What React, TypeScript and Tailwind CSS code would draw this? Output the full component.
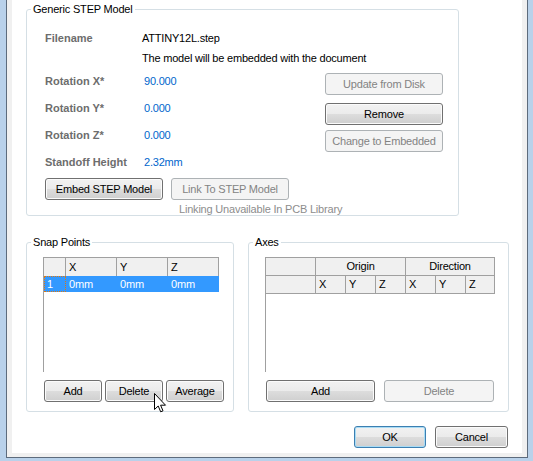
import React from 'react';

type BtnProps = {
  children: React.ReactNode;
  className?: string;
  disabled?: boolean;
  primary?: boolean;
};

const Btn: React.FC<BtnProps> = ({ children, className = '', disabled, primary }) => {
  const look = disabled
    ? 'border-[#adb2b5] bg-[#f4f4f4] text-[#838383]'
    : primary
      ? 'border-[#3c7fb1] bg-[linear-gradient(to_bottom,#f2f2f2_0%,#ebebeb_50%,#dddddd_50%,#cfcfcf_100%)] shadow-[inset_0_0_0_1px_#a9dcf5] text-black'
      : 'border-[#707070] bg-[linear-gradient(to_bottom,#f2f2f2_0%,#ebebeb_50%,#dddddd_50%,#cfcfcf_100%)] shadow-[inset_0_0_0_1px_#fbfbfb] text-black';
  return (
    <button
      disabled={disabled}
      className={`flex h-[22px] items-center justify-center rounded-[3px] border text-[11px] font-normal leading-none ${look} ${className}`}
    >
      {children}
    </button>
  );
};

type GroupProps = {
  title: string;
  className?: string;
  children: React.ReactNode;
};

const Group: React.FC<GroupProps> = ({ title, className = '', children }) => (
  <fieldset className={`min-w-0 rounded-[3px] border border-[#d5dfe5] ${className}`}>
    <legend className="ml-[4px] px-[2px] text-[11px] leading-[13px] text-black">{title}</legend>
    {children}
  </fieldset>
);

const cell = 'flex items-center border-r border-b border-[#a0a0a0]';

export default function App() {
  const rotations = [
    ['Rotation X*', '90.000'],
    ['Rotation Y*', '0.000'],
    ['Rotation Z*', '0.000'],
    ['Standoff Height', '2.32mm'],
  ];

  return (
    <div className="h-[461px] w-[533px] bg-[#b9d1ea] pr-[5px] pb-[3px] pl-[6px] font-['Liberation_Sans',Arial,sans-serif] text-[11px] leading-[13px] tracking-[-0.2px] text-black">
      <div className="h-full border-r border-b border-l border-[#5d6b7c] bg-[#f0f0f0] px-[5px] pb-[4px]">
        <div className="relative h-full bg-white pt-[3px]">
          {/* Generic STEP Model */}
          <Group title="Generic STEP Model" className="ml-[14px] h-[213px] w-[433px]">
            <div className="pt-[12px] pl-[18px]">
              <div className="flex h-[20px] items-center">
                <span className="w-[97px] font-bold tracking-normal text-[#6d6d6d]">Filename</span>
                <span>ATTINY12L.step</span>
              </div>
              <div className="flex h-[20px] items-center pl-[97px]">
                The model will be embedded with the document
              </div>
              <div className="flex">
                <div className="w-[280px]">
                  {rotations.map(([label, value]) => (
                    <div key={label} className="flex h-[27px] items-center">
                      <span className="w-[99px] font-bold tracking-normal text-[#6d6d6d]">{label}</span>
                      <span className="text-[#0066cc]">{value}</span>
                    </div>
                  ))}
                </div>
                <div className="flex flex-col pt-[5px]">
                  <Btn disabled className="w-[118px]">Update from Disk</Btn>
                  <Btn className="mt-[8px] w-[118px]">Remove</Btn>
                  <Btn disabled className="mt-[5px] w-[118px]">Change to Embedded</Btn>
                </div>
              </div>
              <div className="mt-[2px] flex gap-[8px]">
                <Btn className="w-[118px]">Embed STEP Model</Btn>
                <Btn disabled className="w-[118px]">Link To STEP Model</Btn>
              </div>
              <div className="mt-[3px] pl-[134px] text-[#8d8d8d]">Linking Unavailable In PCB Library</div>
            </div>
          </Group>

          <div className="mt-[20px] ml-[14px] flex gap-[14px]">
            {/* Snap Points */}
            <Group title="Snap Points" className="h-[176px] w-[208px]">
              <div className="mt-[8px] ml-[16px] h-[115px] w-[176px] border-t border-l border-[#a0a0a0]">
                <div className="flex h-[18px] bg-[#f0f0f0]">
                  <div className={`${cell} w-[22px] border-b-0`} />
                  {['X', 'Y', 'Z'].map((c) => (
                    <div key={c} className={`${cell} w-[51px] border-b-0 pl-[3px]`}>{c}</div>
                  ))}
                </div>
                <div className="flex h-[16px] bg-[#3399ff] text-white">
                  <div className="flex w-[22px] items-center border border-dotted border-[#e0780e] pl-[2px]">1</div>
                  {['0mm', '0mm', '0mm'].map((v, i) => (
                    <div key={i} className="flex w-[51px] items-center pl-[3px]">{v}</div>
                  ))}
                </div>
              </div>
              <div className="mt-[8px] ml-[17px] flex gap-[3px]">
                <Btn className="w-[58px]">Add</Btn>
                <Btn className="w-[58px]">Delete</Btn>
                <Btn className="w-[58px]">Average</Btn>
              </div>
            </Group>

            {/* Axes */}
            <Group title="Axes" className="h-[176px] w-[261px]">
              <div className="mt-[8px] ml-[16px] h-[115px] w-[230px] border-t border-l border-[#a0a0a0]">
                <div className="flex h-[18px] bg-[#f0f0f0]">
                  <div className={`${cell} w-[50px]`} />
                  <div className={`${cell} w-[90px] justify-center`}>Origin</div>
                  <div className={`${cell} w-[89px] justify-center`}>Direction</div>
                </div>
                <div className="flex h-[18px] bg-[#f0f0f0]">
                  <div className={`${cell} w-[50px]`} />
                  {['X', 'Y', 'Z', 'X', 'Y'].map((c, i) => (
                    <div key={i} className={`${cell} w-[30px] pl-[3px]`}>{c}</div>
                  ))}
                  <div className={`${cell} w-[29px] pl-[3px]`}>Z</div>
                </div>
              </div>
              <div className="mt-[8px] ml-[17px] flex gap-[9px]">
                <Btn className="w-[109px]">Add</Btn>
                <Btn disabled className="w-[110px]">Delete</Btn>
              </div>
            </Group>
          </div>

          {/* Dialog buttons */}
          <div className="mt-[14px] mr-[14px] flex justify-end gap-[9px]">
            <Btn primary className="h-[21px] w-[72px]">OK</Btn>
            <Btn className="h-[21px] w-[73px]">Cancel</Btn>
          </div>

          {/* Mouse pointer */}
          <svg className="absolute top-[393px] left-[142px]" width="13" height="20" viewBox="0 0 13 20">
            <polygon
              points="0.5,0.5 0.5,16.5 4.2,13 6.7,18.8 9,17.8 6.6,12.2 11.5,12.2"
              fill="#ffffff"
              stroke="#000000"
              strokeWidth="1"
              strokeLinejoin="miter"
            />
          </svg>
        </div>
      </div>
    </div>
  );
}
